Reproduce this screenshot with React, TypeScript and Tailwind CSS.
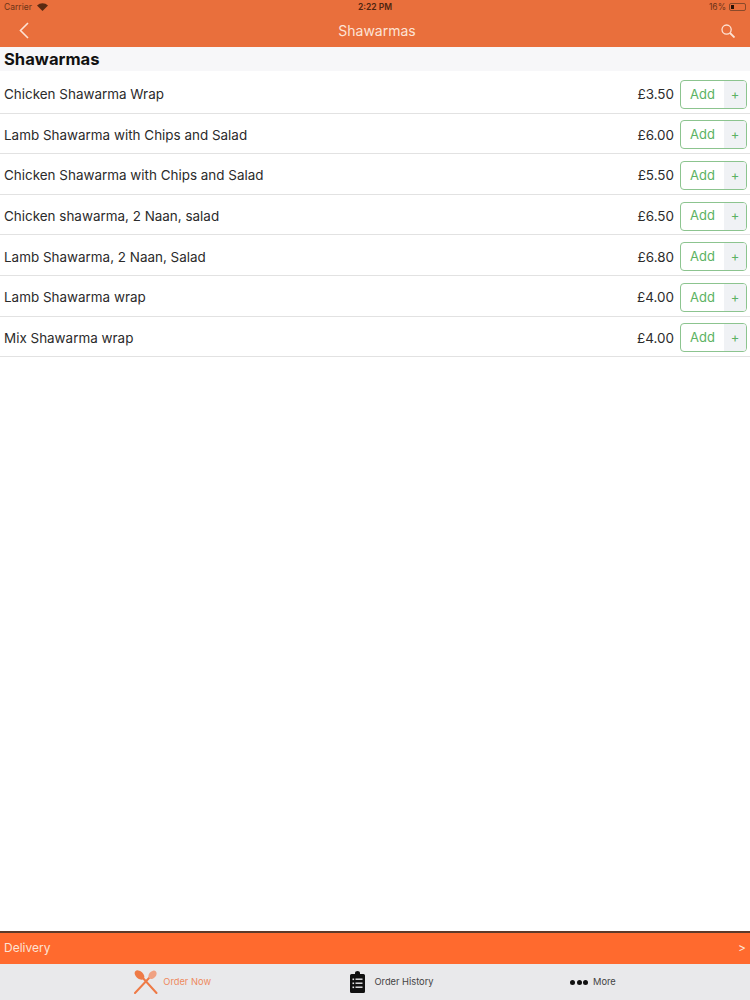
const items: [string, string][] = [
  ["Chicken Shawarma Wrap", "£3.50"],
  ["Lamb Shawarma with Chips and Salad", "£6.00"],
  ["Chicken Shawarma with Chips and Salad", "£5.50"],
  ["Chicken shawarma, 2 Naan, salad", "£6.50"],
  ["Lamb Shawarma, 2 Naan, Salad", "£6.80"],
  ["Lamb Shawarma wrap", "£4.00"],
  ["Mix Shawarma wrap", "£4.00"],
];

function Row({ name, price }: { name: string; price: string }) {
  return (
    <div className="flex h-[40.6px] items-center border-b border-[#e2e2e2] pl-1 pr-[3px] pt-[3px] text-[13.45px] text-[#2b2b2b]">
      <span className="flex-1">{name}</span>
      <span className="mr-[6px]">{price}</span>
      <div className="flex h-[29px] w-[67px] overflow-hidden rounded-[4px] border border-[#8cc48f] text-[#5cb263]">
        <span className="flex flex-1 items-center justify-center text-[13px]">Add</span>
        <span className="flex w-[22px] items-center justify-center bg-[#f0f2f5] text-[13px]">+</span>
      </div>
    </div>
  );
}

function Cutlery() {
  return (
    <svg width="24" height="24" viewBox="0 0 24 24" fill="none">
      <path d="M22.5 23 L8 7" stroke="#ee7a46" strokeWidth="2" strokeLinecap="round" />
      <ellipse cx="5.5" cy="5" rx="5.6" ry="3.7" transform="rotate(42 5.5 5)" fill="#ee7a46" />
      <path d="M1 23 L16 7" stroke="#ee7a46" strokeWidth="2" strokeLinecap="round" />
      <ellipse cx="18.5" cy="4.8" rx="3.4" ry="4.8" transform="rotate(42 18.5 4.8)" fill="#f0a283" />
    </svg>
  );
}

function Clipboard() {
  return (
    <svg width="15" height="22" viewBox="0 0 15 22">
      <path d="M1.5 3 H5 V1.8 A2.5 1.8 0 0 1 10 1.8 V3 H13.5 A1.5 1.5 0 0 1 15 4.5 V20.5 A1.5 1.5 0 0 1 13.5 22 H1.5 A1.5 1.5 0 0 1 0 20.5 V4.5 A1.5 1.5 0 0 1 1.5 3 Z" fill="#111" />
      <g fill="#e9e9eb">
        <rect x="2.5" y="7.5" width="1.6" height="1.6" />
        <rect x="5.5" y="7.5" width="7" height="1.4" />
        <rect x="2.5" y="11.5" width="1.6" height="1.6" />
        <rect x="5.5" y="11.5" width="7" height="1.4" />
        <rect x="2.5" y="15.5" width="1.6" height="1.6" />
        <rect x="5.5" y="15.5" width="7" height="1.4" />
      </g>
    </svg>
  );
}

export default function App() {
  return (
    <div className="flex h-[1000px] w-[750px] flex-col overflow-hidden bg-white font-['Inter',sans-serif]">
      <header className="h-[47px] bg-[#e96f3c] text-[#fde3d5]">
        <div className="flex h-[14px] items-center px-1 text-[8.5px] text-[#6b3318]">
          <div className="flex flex-1 items-center gap-[5px]">
            <span>Carrier</span>
            <svg width="11" height="8" viewBox="0 0 11 8" fill="#5a2a12">
              <path d="M5.5 8 L0 2.4 A8 8 0 0 1 11 2.4 Z" />
            </svg>
          </div>
          <span className="flex-1 text-center font-semibold text-[#4f2510]">2:22 PM</span>
          <div className="flex flex-1 items-center justify-end gap-[3px]">
            <span>16%</span>
            <div className="h-[8px] w-[17px] rounded-[2px] border border-[#8a4a2a] p-px">
              <div className="h-full w-[3px] bg-[#2a1208]" />
            </div>
          </div>
        </div>
        <div className="flex h-[33px] items-center justify-between pl-[19px] pr-[15px]">
          <svg width="10" height="17" viewBox="0 0 10 17" fill="none" stroke="#fde3d5" strokeWidth="1.6">
            <path d="M9 1 L1.5 8.5 L9 16" />
          </svg>
          <span className="ml-[4px] text-[14px]">Shawarmas</span>
          <svg width="14" height="14" viewBox="0 0 14 14" fill="none" stroke="#fde3d5" strokeWidth="1.3">
            <circle cx="5.6" cy="5.6" r="4.6" />
            <path d="M9 9 L13.5 13.5" strokeWidth="1.8" />
          </svg>
        </div>
      </header>
      <div className="flex h-[24px] items-center bg-[#f7f7f9] pl-1 text-[16.6px] font-bold text-[#111]">Shawarmas</div>
      <main className="flex-1 pt-[2px]">
        {items.map(([name, price]) => (
          <Row key={name} name={name} price={price} />
        ))}
      </main>
      <div className="flex h-[33px] items-center justify-between border-t-2 border-[#5c3a2a] bg-[#ff6a2e] px-1 pb-[2px] text-[12px] text-[#fde3d5]">
        <span>Delivery</span>
        <span>&gt;</span>
      </div>
      <nav className="grid h-[36px] grid-cols-[1fr_1fr_1fr] bg-[#e9e9eb] text-[9.3px] text-[#444]">
        <div className="flex items-center justify-end gap-[5px] pr-[39px] text-[#ee8a60]">
          <Cutlery />
          <span>Order Now</span>
        </div>
        <div className="flex items-center justify-center gap-[9px] pl-[34px]">
          <Clipboard />
          <span>Order History</span>
        </div>
        <div className="flex items-center gap-[5px] pl-[70px]">
          <span className="flex gap-[1.5px]">
            <span className="h-[5px] w-[5px] rounded-full bg-[#111]" />
            <span className="h-[5px] w-[5px] rounded-full bg-[#111]" />
            <span className="h-[5px] w-[5px] rounded-full bg-[#111]" />
          </span>
          <span>More</span>
        </div>
      </nav>
    </div>
  );
}
